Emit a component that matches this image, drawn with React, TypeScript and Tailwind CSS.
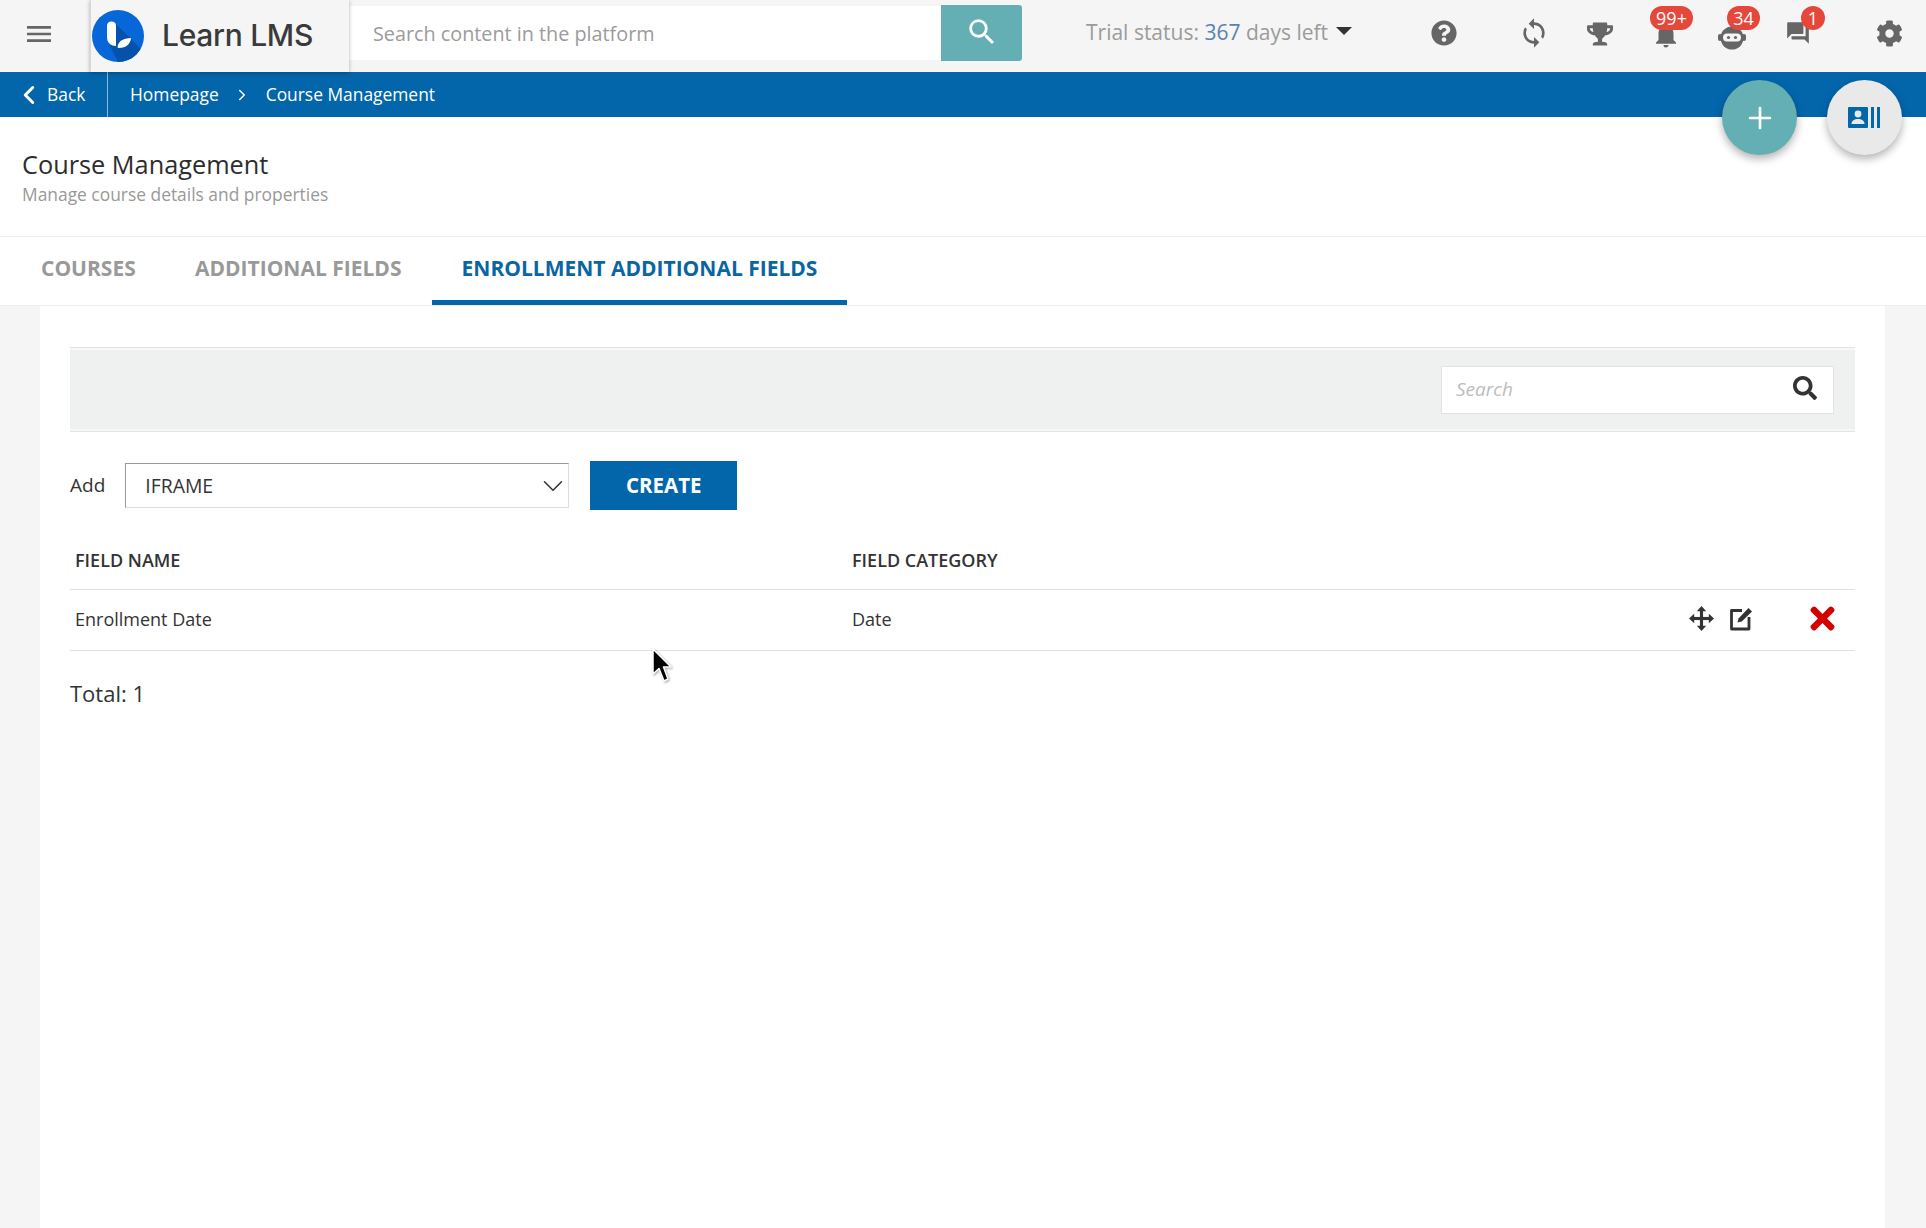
import React from "react";
import { FaQuestionCircle, FaTrophy, FaCog, FaSearch, FaTimes } from "react-icons/fa";
import { MdSync, MdNotifications, MdQuestionAnswer, MdMenu, MdSearch } from "react-icons/md";
import { Plus, ChevronLeft, ChevronRight, ChevronDown } from "lucide-react";

function Logo() {
  return (
    <svg width="52" height="52" viewBox="0 0 52 52" className="shrink-0">
      <defs>
        <clipPath id="lc"><circle cx="26" cy="26" r="26" /></clipPath>
      </defs>
      <circle cx="26" cy="26" r="26" fill="#0767d8" />
      <g clipPath="url(#lc)">
        <path d="M24 14 L52 42 L40 56 L28 56 L16 32 Z" fill="#0552ad" />
      </g>
      <path d="M15 15.500c0-2.500 2-4 4.500-4s4.500 1.500 4.500 4v20.500c-5 0-9-3-9-9z" fill="#fff" />
      <path d="M25.500 37.500C26 31.500 31 28 39 28 38.500 34 34 38 27 38z" fill="#fff" />
    </svg>
  );
}

function Robot() {
  return (
    <svg width="28" height="24" viewBox="0 0 28 24" fill="#666">
      <rect x="0" y="8" width="4" height="7" rx="2" />
      <rect x="24" y="8" width="4" height="7" rx="2" />
      <circle cx="14" cy="12" r="11.500" />
      <rect x="5" y="7.500" width="18" height="8" rx="4" fill="#f5f5f5" />
      <circle cx="10.500" cy="11.500" r="1.600" />
      <circle cx="17.500" cy="11.500" r="1.600" />
    </svg>
  );
}

function CardIcon() {
  return (
    <svg width="33" height="21" viewBox="0 0 33 21" fill="#0366ab">
      <rect x="0" y="0" width="20" height="21" rx="1" />
      <circle cx="10" cy="7" r="3.400" fill="#e9e9e9" />
      <path d="M3.500 17c0-3.500 3-5 6.500-5s6.500 1.500 6.500 5z" fill="#e9e9e9" />
      <rect x="23" y="0" width="3" height="21" />
      <rect x="29" y="0" width="3" height="21" />
    </svg>
  );
}

function MoveIcon() {
  return (
    <svg width="25" height="25" viewBox="0 0 24 24" fill="#333">
      <rect x="2" y="10.500" width="20" height="3" />
      <rect x="10.500" y="2" width="3" height="20" />
      <path d="M12 0 L16.500 5 H7.500 Z" />
      <path d="M12 24 L16.500 19 H7.500 Z" />
      <path d="M0 12 L5 7.500 V16.500 Z" />
      <path d="M24 12 L19 7.500 V16.500 Z" />
    </svg>
  );
}

function EditIcon() {
  return (
    <svg width="24" height="25" viewBox="0 0 24 25">
      <path d="M13 4.500 H2.500 V23 H20 V11" fill="none" stroke="#333" strokeWidth="2.800" strokeLinejoin="round" />
      <path d="M8.500 16.500 L9.500 12.500 L19.500 2 L23 5.500 L12.800 15.500 Z" fill="#333" />
    </svg>
  );
}

function Cursor() {
  return (
    <svg width="24" height="38" viewBox="0 0 24 38" className="absolute left-[650px] top-[647px]">
      <path d="M3 2 L3 27 L9 21.500 L14 34 L18 32 L13.500 20 L21 20 Z" fill="#000" stroke="#fff" strokeWidth="1.500" strokeLinejoin="round" style={{ filter: "drop-shadow(1px 1px 1px rgba(0,0,0,.35))" }} />
    </svg>
  );
}

function Badge({ text, className }: { text: string; className: string }) {
  return (
    <span className={`absolute top-[6px] h-6 rounded-full bg-[#e5483b] text-center text-[18px] leading-6 text-white ${className}`}>
      {text}
    </span>
  );
}

export default function App() {
  return (
    <div className="relative h-[1228px] w-full overflow-hidden bg-[#f5f5f5] font-['Open_Sans',sans-serif]">
      {/* top bar */}
      <header className="relative flex h-[72px] items-start bg-[#f5f5f5]">
        <div className="flex h-[68px] w-[90px] items-center pl-[23px]">
          <MdMenu size={32} color="#666" />
        </div>
        <div className="z-20 flex h-[72px] w-[259px] items-center border-l border-[#d8d8d8] bg-[#f5f5f5] pl-[1px] shadow-[0_1px_4px_rgba(0,0,0,.3)]">
          <Logo />
          <span className="-mt-[2px] ml-[18px] font-['Inter',sans-serif] text-[30px] font-medium tracking-[-0.3px] text-[#3a3a3a]">Learn LMS</span>
        </div>
        <div className="mt-[6px] flex h-[54px] w-[592px] items-center bg-white pl-[24px] pt-[2px] text-[19.800px] text-[#9b9b9b]">
          Search content in the platform
        </div>
        <div className="mt-[5px] flex h-[56px] w-[81px] items-center justify-center rounded-r-[3px] bg-[#64afb3]">
          <MdSearch size={34} color="#fff" className="-mt-[2px]" />
        </div>
        <div className="ml-[64px] mt-[17px] flex items-center text-[21px] leading-[30px] text-[#9b9b9b]">
          Trial status:&nbsp;<span className="text-[#5b82ad]">367</span>&nbsp;days left
          <span className="-mt-[3px] ml-[8px] h-0 w-0 border-x-[8px] border-t-[8px] border-x-transparent border-t-[#333]" />
        </div>
        <div className="absolute left-[1424px] top-0 flex h-[66px]">
          <div className="flex w-10 items-center justify-center"><FaQuestionCircle size={26} color="#666" /></div>
          <div className="ml-[50px] flex w-10 items-center justify-center"><MdSync size={32} color="#666" /></div>
          <div className="ml-[26px] flex w-10 items-center justify-center"><FaTrophy size={26} color="#666" className="mt-[2px]" /></div>
          <div className="ml-[26px] flex w-10 items-center justify-center"><MdNotifications size={30} color="#666" className="mt-[4px]" /></div>
          <div className="ml-[26px] flex w-10 items-center justify-center"><div className="mt-[9px] flex"><Robot /></div></div>
          <div className="ml-[26px] flex w-10 items-center justify-center"><MdQuestionAnswer size={26} color="#666" /></div>
          <div className="ml-[51px] flex w-10 items-center justify-center"><FaCog size={27} color="#666" /></div>
        </div>
        <Badge text="99+" className="left-[1650px] w-[43px]" />
        <Badge text="34" className="left-[1727px] w-[33px]" />
        <Badge text="1" className="left-[1801px] w-6" />
      </header>

      {/* breadcrumb bar */}
      <nav className="flex h-[45px] items-center bg-[#0366ab] text-[17.400px] text-white">
        <div className="flex h-full w-[108px] items-center border-r border-[#8fb8d6] pl-[20px]">
          <ChevronLeft size={30} strokeWidth={2.4} className="-ml-[6px]" />
          <span className="ml-[3px]">Back</span>
        </div>
        <span className="ml-[22px]">Homepage</span>
        <ChevronRight size={18} strokeWidth={2} className="ml-[14px]" />
        <span className="ml-[15px]">Course Management</span>
      </nav>

      {/* page title */}
      <section className="h-[120px] border-b border-[#eeeeee] bg-white pl-[22px] pt-[28px]">
        <h1 className="text-[25.300px] leading-[38px] text-[#2d2d2d]">Course Management</h1>
        <p className="text-[17.400px] leading-[22px] text-[#999]">Manage course details and properties</p>
      </section>

      {/* tabs */}
      <div className="flex h-[69px] border-b border-[#eeeeee] bg-white pl-[17px] text-[21px] font-bold">
        <div className="flex w-[154px] items-center pb-[5px] pl-6 text-[#999]">COURSES</div>
        <div className="flex w-[261px] items-center pb-[5px] pl-6 text-[#999]">ADDITIONAL FIELDS</div>
        <div className="flex w-[415px] items-center justify-center border-b-[5px] border-[#0366ab] text-[#0a65a3]">ENROLLMENT ADDITIONAL FIELDS</div>
      </div>

      {/* content */}
      <main className="ml-[40px] h-[922px] w-[1845px] bg-white px-[30px] pt-[41px]">
        <div className="flex h-[85px] items-center justify-end border-y border-[#e3e3e3] bg-[#eff1f0] pr-[21px] shadow-[inset_0_2px_0_#f7f7f7,inset_0_-2px_0_#f7f7f7]">
          <div className="flex h-[48px] w-[393px] items-center justify-between border border-[#e2e2e2] bg-white pl-[14px] pr-[16px]">
            <span className="text-[19px] italic text-[#bdbdbd]">Search</span>
            <FaSearch size={24} color="#333" className="-mt-[4px]" />
          </div>
        </div>

        <div className="mt-[29px] flex items-center">
          <span className="text-[19px] text-[#333]">Add</span>
          <div className="ml-[20px] flex h-[45px] w-[444px] items-center justify-between border border-[#dedede] border-l-[#999] border-t-[#999] bg-white pl-[19px] text-[19.400px] text-[#333]">
            IFRAME
            <ChevronDown size={34} color="#333" strokeWidth={1.1} className="-mr-[2px]" />
          </div>
          <div className="ml-[21px] flex h-[49px] w-[147px] items-center justify-center bg-[#0366ab] text-[20.500px] font-bold text-white">CREATE</div>
        </div>

        <div className="mt-[27px] flex h-[53px] items-center border-b border-[#e2e2e2] pb-[6px] pl-[5px] text-[18px] font-semibold text-[#333]">
          <span className="w-[777px]">FIELD NAME</span>
          <span>FIELD CATEGORY</span>
        </div>
        <div className="flex h-[61px] items-center border-b border-[#e2e2e2] pb-[2px] pl-[5px] text-[18px] text-[#333]">
          <span className="w-[777px]">Enrollment Date</span>
          <span>Date</span>
          <div className="ml-auto -mt-[2px] flex items-center pr-[15px]">
            <MoveIcon />
            <div className="ml-[15px] flex"><EditIcon /></div>
            <FaTimes size={35} color="#d40000" className="ml-[52px]" />
          </div>
        </div>
        <div className="mt-[26px] text-[22px] text-[#333]">Total: 1</div>
      </main>

      {/* floating buttons */}
      <div className="absolute left-[1722px] top-[80px] flex h-[75px] w-[75px] items-center justify-center rounded-full bg-[#64afb3] shadow-[0_4px_8px_rgba(0,0,0,.3)]">
        <Plus size={34} color="#fff" strokeWidth={1.9} />
      </div>
      <div className="absolute left-[1827px] top-[80px] flex h-[75px] w-[75px] items-center justify-center rounded-full bg-[#e9e9e9] shadow-[0_4px_8px_rgba(0,0,0,.3)]">
        <CardIcon />
      </div>
      <Cursor />
    </div>
  );
}
